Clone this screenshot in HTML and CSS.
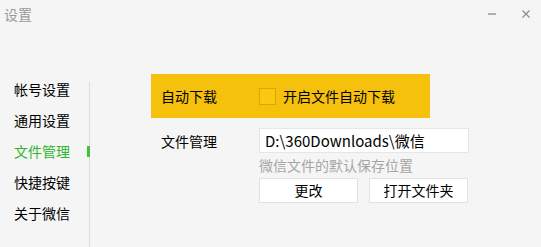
FILE: index.html
```html
<!DOCTYPE html>
<html lang="zh-CN">
<head>
<meta charset="utf-8">
<title>设置</title>
<link rel="stylesheet" href="styles.css">
</head>
<body>
<div class="window">
  <header class="titlebar">
    <span class="title">设置</span>
    <div class="controls">
      <span class="min"></span>
      <svg class="close" width="8" height="8" viewBox="0 0 8 8"><path d="M0.5 0.5L7.5 7.5M7.5 0.5L0.5 7.5" stroke="#8c8c8c" stroke-width="1.2"/></svg>
    </div>
  </header>
  <div class="content">
    <nav class="sidebar">
      <div class="item">帐号设置</div>
      <div class="item">通用设置</div>
      <div class="item active">文件管理<span class="indicator"></span></div>
      <div class="item">快捷按键</div>
      <div class="item">关于微信</div>
    </nav>
    <main class="main">
      <div class="row highlight">
        <span class="label">自动下载</span>
        <span class="checkbox"></span>
        <span class="check-text">开启文件自动下载</span>
      </div>
      <div class="row files">
        <span class="label">文件管理</span>
        <div class="field">
          <div class="input">D:\360Downloads\微信</div>
          <div class="hint">微信文件的默认保存位置</div>
          <div class="buttons">
            <button class="btn">更改</button>
            <button class="btn">打开文件夹</button>
          </div>
        </div>
      </div>
    </main>
  </div>
</div>
</body>
</html>
```
FILE: styles.css
```css
* { box-sizing: border-box; }
html, body { margin: 0; padding: 0; }
body {
  background: #f5f5f5;
  font-family: "Noto Sans CJK SC", "Noto Sans", sans-serif;
  font-size: 14px;
  color: #000;
  width: 541px;
  height: 247px;
  overflow: hidden;
}
.window { display: flex; flex-direction: column; height: 247px; }
.titlebar {
  display: flex;
  justify-content: space-between;
  align-items: flex-start;
  height: 74px;
  padding: 4px 11px 0 4px;
}
.title { color: #9a9a9a; font-size: 14px; line-height: 20px; }
.controls { display: flex; align-items: center; gap: 26px; padding-top: 6px; }
.min { width: 8px; height: 2px; background: #b0b0b0; display: block; }
.close { display: block; }
.content { display: flex; flex: 1; align-items: stretch; }
.sidebar {
  width: 90px;
  margin-top: 8px;
  border-right: 1px solid #dcdcdc;
  display: flex;
  flex-direction: column;
  gap: 17px;
  padding-left: 14px;
}
.item { line-height: 14px; height: 14px; position: relative; white-space: nowrap; }
.item.active { color: #2db52d; }
.indicator {
  position: absolute;
  right: -1px;
  top: 2px;
  width: 3px;
  height: 11px;
  background: #3cc43c;
}
.main { margin-left: 61px; display: flex; flex-direction: column; gap: 10px; }
.row { display: flex; }
.highlight {
  width: 279px;
  height: 44px;
  background: #f6c10c;
  align-items: center;
  padding-left: 10px;
}
.label { width: 98px; flex: none; line-height: 20px; }
.checkbox {
  width: 17px;
  height: 17px;
  background: #fcc80f;
  border: 1px solid #dba600;
  margin-right: 7px;
}
.check-text { line-height: 20px; }
.files { padding-left: 10px; }
.files .label { padding-top: 3px; }
.field { display: flex; flex-direction: column; }
.input {
  width: 210px;
  height: 25px;
  background: #fff;
  border: 1px solid #e6e6e6;
  padding-left: 5px;
  font-size: 15px;
  line-height: 23px;
}
.hint { color: #a6a6a6; line-height: 20px; margin-top: 2px; }
.buttons { display: flex; gap: 11px; margin-top: 3px; }
.btn {
  width: 99px;
  height: 25px;
  background: #fff;
  border: 1px solid #e2e2e2;
  font-family: inherit;
  font-size: 14px;
  color: #000;
  padding: 0;
  line-height: 23px;
}
```
